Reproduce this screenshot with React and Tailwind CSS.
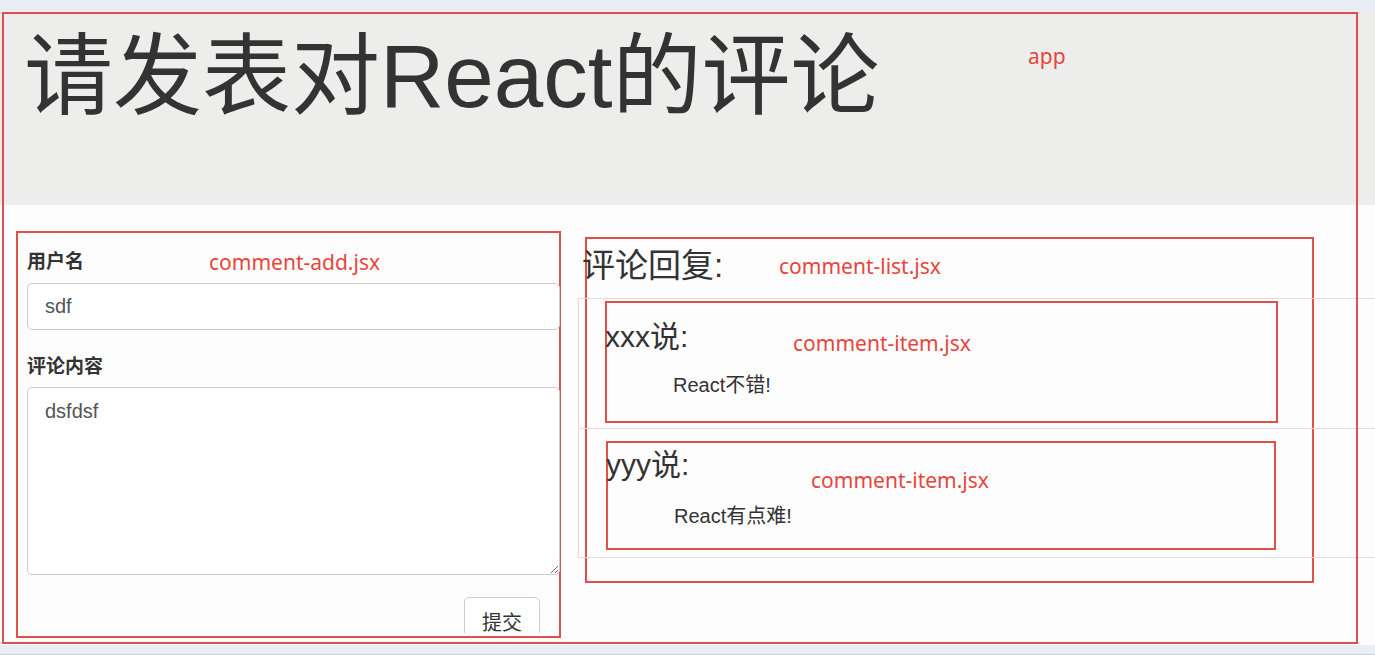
import { useState } from "react";

const sans = "font-['Liberation_Sans','Noto_Sans_CJK_SC',sans-serif]";

// red annotation label drawn over the page
function Tag({ text, className }) {
  return (
    <span
      className={`absolute text-[21px] leading-none text-[#e8453c] font-['Noto_Sans','Noto_Sans_CJK_SC',sans-serif] ${className}`}
    >
      {text}
    </span>
  );
}

function CommentAdd() {
  const [username, setUsername] = useState("sdf");
  const [content, setContent] = useState("dsfdsf");

  return (
    <div className="relative w-[545px] h-[407px] shrink-0 border-2 border-[#e0504a] pl-[9px] pt-[15px]">
      <Tag text="comment-add.jsx" className="left-[191px] top-[19px]" />
      <label className="block text-[19px] leading-[27px] font-bold text-[#333]">用户名</label>
      <input
        value={username}
        onChange={(e) => setUsername(e.target.value)}
        className="mt-[8px] block w-[533px] h-[47px] rounded-[5px] border border-[#cccccc] bg-white px-[17px] text-[20px] text-[#555] outline-none"
      />
      <label className="mt-[23px] block text-[19px] leading-[27px] font-bold text-[#333]">评论内容</label>
      <textarea
        value={content}
        onChange={(e) => setContent(e.target.value)}
        className="mt-[7px] block w-[533px] h-[188px] rounded-[5px] border border-[#cccccc] bg-white px-[17px] pt-[11px] text-[20px] leading-[24px] text-[#555] outline-none"
      />
      <div className="mt-[22px] flex justify-end pr-[19px]">
        <div className="h-[36px] overflow-hidden">
          <button className="w-[76px] h-[46px] rounded-[5px] border border-[#cccccc] bg-white pt-[5px] text-[20px] leading-[24px] text-[#333] self-start">
            提交
          </button>
        </div>
      </div>
    </div>
  );
}

function CommentItem({ name, text, boxClass, nameClass, textClass, tagClass }) {
  return (
    <div className={`relative border-2 border-[#e0504a] ${boxClass}`}>
      <Tag text="comment-item.jsx" className={tagClass} />
      <h4 className={`-ml-[2px] text-[30px] leading-[32px] text-[#333] ${nameClass}`}>{name}说:</h4>
      <p className={`ml-[66px] text-[20px] leading-[24px] text-[#333] ${textClass}`}>{text}</p>
    </div>
  );
}

function CommentList() {
  return (
    <div className="relative mt-[6px] w-[729px] h-[346px] shrink-0 border-2 border-[#e0504a] pt-[9px]">
      <Tag text="comment-list.jsx" className="left-[192px] top-[17px]" />
      <h3 className="-ml-[5px] text-[33px] leading-[36px] text-[#333]">评论回复:</h3>
      <ul className="mt-[14px] -ml-[9px] w-[820px] border-l border-b border-[#dddddd]">
        <li className="h-[130px] border-t border-[#dddddd] pt-[2px] pl-[26px]">
          <CommentItem
            name="xxx"
            text="React不错!"
            boxClass="w-[673px] h-[122px]"
            nameClass="mt-[18px]"
            textClass="mt-[20px]"
            tagClass="left-[186px] top-[30px]"
          />
        </li>
        <li className="h-[129px] border-t border-[#dddddd] pt-[12px] pl-[27px]">
          <CommentItem
            name="yyy"
            text="React有点难!"
            boxClass="w-[670px] h-[109px]"
            nameClass="mt-[6px]"
            textClass="mt-[23px]"
            tagClass="left-[203px] top-[27px]"
          />
        </li>
      </ul>
    </div>
  );
}

export default function App() {
  return (
    <div className={`w-[1375px] h-[655px] overflow-hidden bg-[#e9eef4] ${sans}`}>
      <div className="h-[12px]" />
      <div className="relative h-[633px] bg-[#fdfdfd]">
        {/* app annotation frame */}
        <div className="pointer-events-none absolute left-[2px] top-0 w-[1356px] h-[632px] border-2 border-[#e0504a] z-10" />
        <Tag text="app" className="left-[1028px] top-[34px] z-10" />

        {/* jumbotron */}
        <div className="h-[193px] bg-[#ededeb] pl-[24px] pt-[18px]">
          <h1 className="text-[89px] leading-[92px] text-[#333]">请发表对React的评论</h1>
        </div>

        {/* body */}
        <div className="flex items-start gap-[24px] pl-[16px] pt-[26px]">
          <CommentAdd />
          <CommentList />
        </div>
      </div>
      <div className="h-[10px] border-b border-[#c9d3de]" />
    </div>
  );
}
